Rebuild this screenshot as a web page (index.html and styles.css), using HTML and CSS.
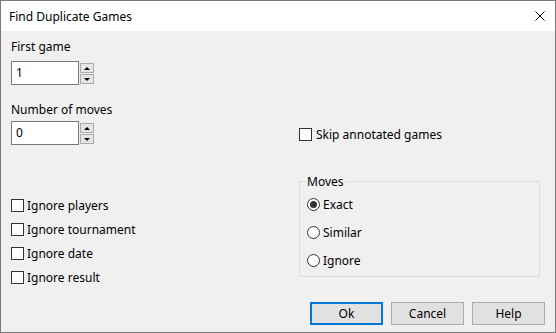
FILE: index.html
```html
<!DOCTYPE html>
<html lang="en">
<head>
  <meta charset="UTF-8" />
  <title>Find Duplicate Games</title>
  <link rel="stylesheet" href="styles.css">
</head>
<body>
  <div class="dialog">
    <div class="titlebar">
      <span class="title">Find Duplicate Games</span>
      <svg class="close" width="10" height="10" viewBox="0 0 10 10">
        <path d="M0.5 0.5 L9.5 9.5 M9.5 0.5 L0.5 9.5" stroke="#000" stroke-width="1" fill="none"/>
      </svg>
    </div>

    <div class="content">
      <div class="top">
        <div class="fields">
          <div class="field">
            <div class="label">First game</div>
            <div class="spin">
              <div class="edit">1</div>
              <div class="arrows">
                <div class="arrow"><span class="tri up"></span></div>
                <div class="arrow"><span class="tri down"></span></div>
              </div>
            </div>
          </div>
          <div class="field second">
            <div class="label">Number of moves</div>
            <div class="spin">
              <div class="edit">0</div>
              <div class="arrows">
                <div class="arrow"><span class="tri up"></span></div>
                <div class="arrow"><span class="tri down"></span></div>
              </div>
            </div>
          </div>
        </div>
        <div class="check skip"><span class="box"></span>Skip annotated games</div>
      </div>

      <div class="middle">
        <div class="checks">
          <div class="check"><span class="box"></span>Ignore players</div>
          <div class="check"><span class="box"></span>Ignore tournament</div>
          <div class="check"><span class="box"></span>Ignore date</div>
          <div class="check"><span class="box"></span>Ignore result</div>
        </div>
        <fieldset class="group">
          <legend>Moves</legend>
          <div class="radio"><span class="dot checked"></span>Exact</div>
          <div class="radio"><span class="dot"></span>Similar</div>
          <div class="radio"><span class="dot"></span>Ignore</div>
        </fieldset>
      </div>

      <div class="buttons">
        <div class="btn default">Ok</div>
        <div class="btn">Cancel</div>
        <div class="btn">Help</div>
      </div>
    </div>
  </div>
</body>
</html>
```

FILE: styles.css
```css
* {
  margin: 0;
  padding: 0;
  box-sizing: border-box;
}

body {
  font-family: "Noto Sans", sans-serif;
  font-size: 12px;
  line-height: 15px;
  color: #000;
  background: #f0f0f0;
}

.dialog {
  width: 556px;
  height: 333px;
  border: 1px solid #7a7a7a;
  background: #f0f0f0;
  display: flex;
  flex-direction: column;
}

.titlebar {
  height: 30px;
  background: #fff;
  display: flex;
  align-items: center;
  justify-content: space-between;
  padding: 0 10px 0 8px;
}

.close {
  display: block;
  margin-top: -1px;
}

.content {
  flex: 1;
  display: flex;
  flex-direction: column;
  padding: 8px 10px 7px 10px;
}

.top {
  display: grid;
  grid-template-columns: 288px 1fr;
}

.label {
  height: 15px;
}

.field .label {
  margin-bottom: 7px;
}

.field.second {
  margin-top: 17px;
}

.field.second .label {
  margin-bottom: 4px;
}

.spin {
  display: flex;
  align-items: flex-start;
}

.edit {
  width: 68px;
  height: 24px;
  border: 1px solid #7a7a7a;
  background: #fff;
  padding: 3px 0 0 4px;
}

.arrows {
  display: flex;
  flex-direction: column;
  gap: 1px;
  margin: 2px 0 0 1px;
}

.arrow {
  width: 14px;
  height: 10px;
  border: 1px solid #acacac;
  background: #e5e5e5;
  display: flex;
  align-items: center;
  justify-content: center;
}

.tri {
  width: 0;
  height: 0;
  border-left: 3px solid transparent;
  border-right: 3px solid transparent;
}

.tri.up {
  border-bottom: 3px solid #000;
}

.tri.down {
  border-top: 3px solid #000;
}

.check {
  display: flex;
  align-items: center;
  height: 15px;
}

.check .box {
  width: 13px;
  height: 13px;
  border: 1px solid #333;
  background: #fff;
  margin-right: 4px;
}

.skip {
  align-self: end;
  margin-bottom: 3px;
}

.middle {
  display: grid;
  grid-template-columns: 288px 241px;
  align-items: start;
  margin-top: 29px;
}

.checks {
  display: flex;
  flex-direction: column;
  gap: 9px;
  padding-top: 24px;
}

.checks .box {
  margin-right: 3px;
}

.group {
  border: 1px solid #dcdcdc;
  padding: 8px 7px 8px 7px;
  display: flex;
  flex-direction: column;
  gap: 13px;
}

.group legend {
  padding: 0 1px;
  margin-left: -1px;
}

.radio {
  display: flex;
  align-items: center;
  height: 15px;
}

.dot {
  width: 13px;
  height: 13px;
  border: 1px solid #333;
  border-radius: 50%;
  background: #fff;
  margin-right: 3px;
  display: flex;
  align-items: center;
  justify-content: center;
}

.dot.checked::after {
  content: "";
  width: 7px;
  height: 7px;
  border-radius: 50%;
  background: #333;
}

.buttons {
  margin-top: auto;
  display: flex;
  justify-content: flex-end;
  gap: 8px;
}

.btn {
  width: 73px;
  height: 23px;
  border: 1px solid #adadad;
  background: #e1e1e1;
  display: flex;
  align-items: center;
  justify-content: center;
}

.btn.default {
  border: 2px solid #0078d7;
}
```
